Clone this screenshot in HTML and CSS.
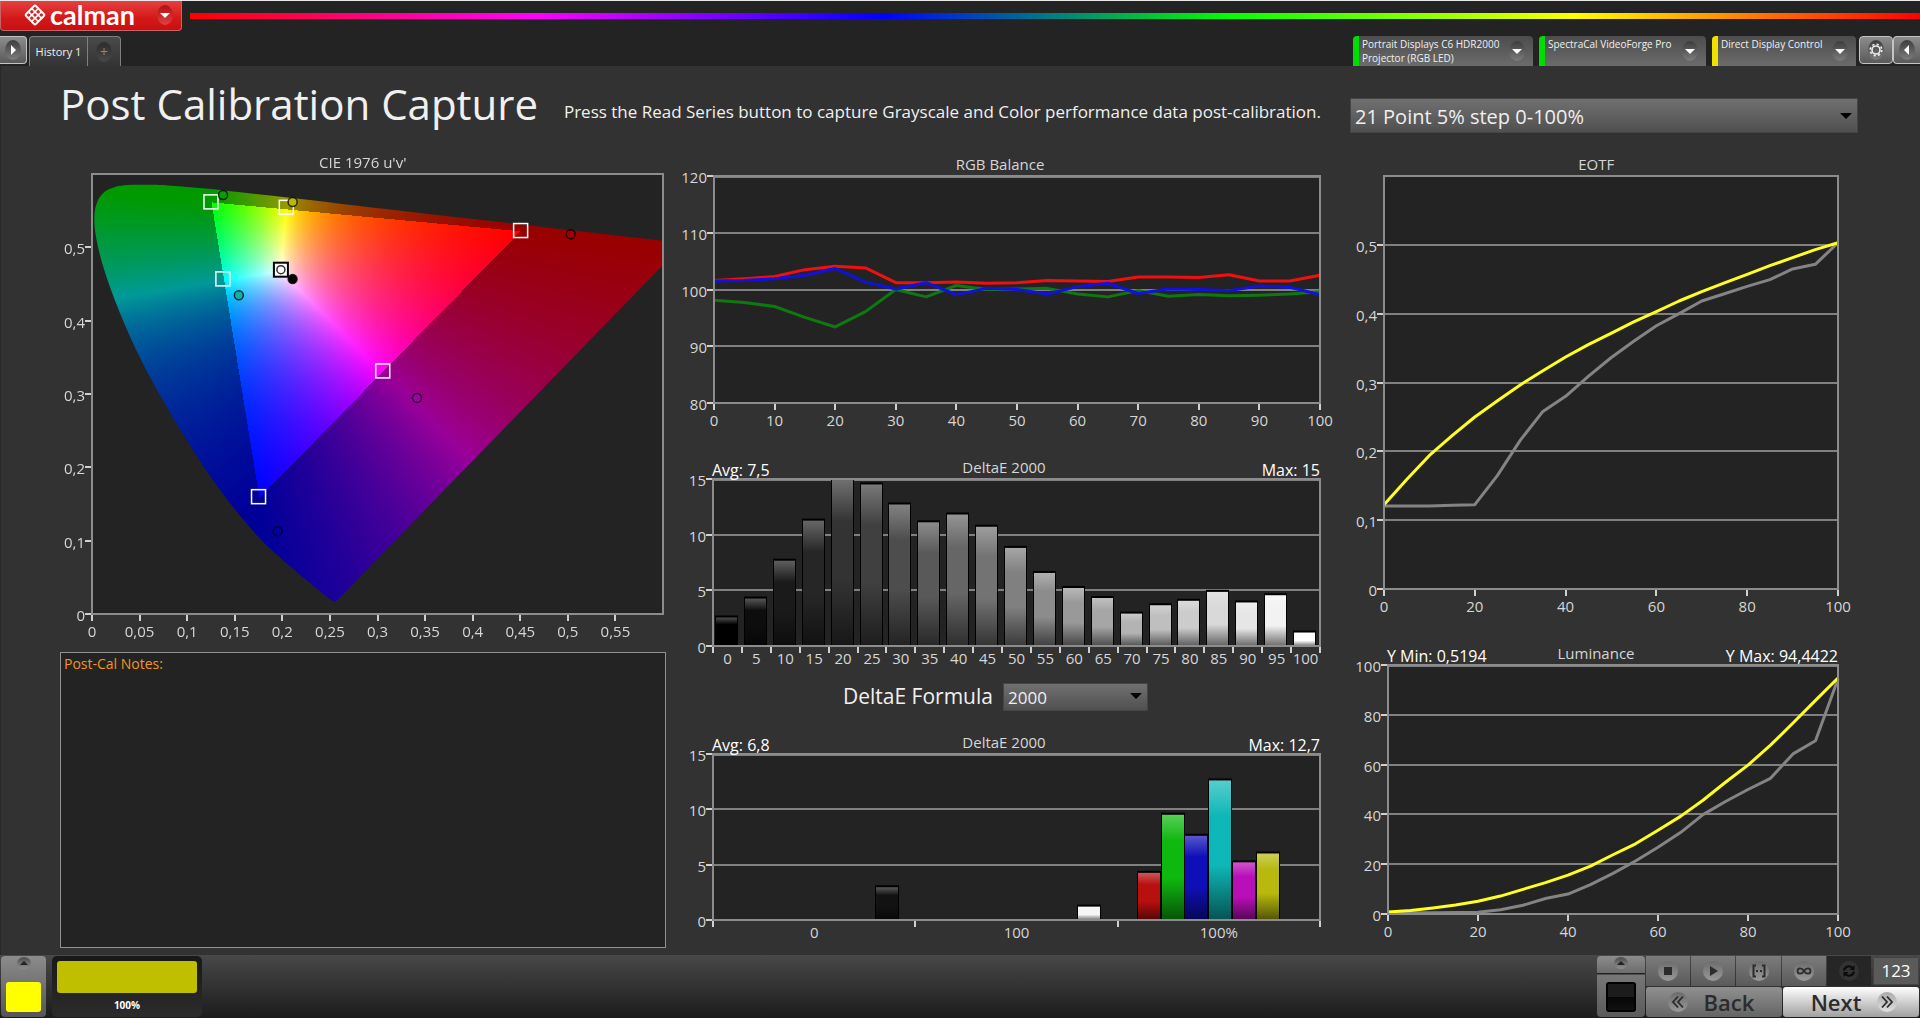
FILE: index.html
```html
<!DOCTYPE html>
<html lang="en">
<head>
    <meta charset="UTF-8">
    <meta name="viewport" content="width=device-width, initial-scale=1.0">
    <title>Post Calibration Capture</title>
    <link rel="stylesheet" href="styles.css">
</head>
<body>

    <header class="topbar">
        <div class="brand-row">
            <button class="brand">
                <svg class="brand-mark" viewBox="0 0 24 24">
                    <g transform="rotate(45 12 12)">
                        <rect x="4" y="4" width="16" height="16" rx="2.5" fill="#fff"/>
                        <g fill="#d82020">
                            <rect x="6" y="6" width="3" height="3" rx=".8"/>
                            <rect x="10.5" y="6" width="3" height="3" rx=".8"/>
                            <rect x="15" y="6" width="3" height="3" rx=".8"/>
                            <rect x="6" y="10.5" width="3" height="3" rx=".8"/>
                            <rect x="10.5" y="10.5" width="3" height="3" rx=".8"/>
                            <rect x="15" y="10.5" width="3" height="3" rx=".8"/>
                            <rect x="6" y="15" width="3" height="3" rx=".8"/>
                            <rect x="10.5" y="15" width="3" height="3" rx=".8"/>
                            <rect x="15" y="15" width="3" height="3" rx=".8"/>
                        </g>
                    </g>
                </svg>
                <span class="brand-name">calman</span>
                <span class="knob knob-red"><svg viewBox="0 0 16 20"><path d="M3 8h10l-5 5z" fill="#fff"/></svg></span>
            </button>
            <div class="rainbow"></div>
        </div>
        <div class="tab-row">
            <button class="edge-button edge-left" aria-label="Expand"><span class="knob"><svg viewBox="0 0 16 20"><path d="M6 5v10l5-5z" fill="#fff"/></svg></span></button>
            <div class="tabs">
                <button class="tab">History 1</button>
                <button class="tab tab-add" aria-label="Add tab"><span class="knob knob-dark">+</span></button>
            </div>
            <div class="devices">
                <button class="device device-meter">
                    <span class="device-name">Portrait Displays C6 HDR2000 Projector (RGB LED)</span>
                    <span class="knob"><svg viewBox="0 0 16 20"><path d="M3 8h10l-5 5z" fill="#fff"/></svg></span>
                </button>
                <button class="device device-source">
                    <span class="device-name">SpectraCal VideoForge Pro</span>
                    <span class="knob"><svg viewBox="0 0 16 20"><path d="M3 8h10l-5 5z" fill="#fff"/></svg></span>
                </button>
                <button class="device device-display">
                    <span class="device-name">Direct Display Control</span>
                    <span class="knob"><svg viewBox="0 0 16 20"><path d="M3 8h10l-5 5z" fill="#fff"/></svg></span>
                </button>
            </div>
            <button class="edge-button edge-gear" aria-label="Settings">
                <span class="knob"><svg viewBox="0 0 16 20">
                    <circle cx="8" cy="10" r="4" fill="none" stroke="#eee" stroke-width="1.6"/>
                    <circle cx="8" cy="10" r="5.8" fill="none" stroke="#eee" stroke-width="1.6" stroke-dasharray="2.2 2.35"/>
                </svg></span>
            </button>
            <button class="edge-button edge-right" aria-label="Collapse"><span class="knob"><svg viewBox="0 0 16 20"><path d="M10 5v10l-5-5z" fill="#fff"/></svg></span></button>
        </div>
    </header>

    <main class="workspace">
        <div class="page-head">
            <h1>Post Calibration Capture</h1>
            <p>Press the Read Series button to capture Grayscale and Color performance data post-calibration.</p>
        </div>
        <div class="series">
            <div class="select-wrap select-large">
                <select id="seriesSelect" aria-label="Series">
                    <option>21 Point 5% step 0-100%</option>
                </select>
            </div>
        </div>

        <section class="column column-left">
            <div class="chart" id="cieChart"></div>
            <textarea class="notes" aria-label="Post-Cal Notes">Post-Cal Notes:</textarea>
        </section>

        <section class="column column-middle">
            <div class="chart" id="rgbChart"></div>
            <div class="chart" id="grayDeltaChart"></div>
            <div class="formula">
                <label for="formulaSelect">DeltaE Formula</label>
                <div class="select-wrap select-small">
                    <select id="formulaSelect">
                        <option>2000</option>
                    </select>
                </div>
            </div>
            <div class="chart" id="colorDeltaChart"></div>
        </section>

        <section class="column column-right">
            <div class="chart" id="eotfChart"></div>
            <div class="chart" id="luminanceChart"></div>
        </section>
    </main>

    <footer class="bottombar">
        <button class="swatch-button" aria-label="Pattern color">
            <span class="mini-knob"><svg viewBox="0 0 14 12"><path d="M3 8h8L7 4z" fill="#222"/></svg></span>
            <span class="swatch swatch-yellow"></span>
        </button>
        <button class="patch">
            <span class="patch-color"></span>
            <span class="patch-label">100%</span>
        </button>
        <div class="transport">
            <button class="swatch-button swatch-split" aria-label="Pattern window">
                <span class="mini-knob"><svg viewBox="0 0 14 12"><path d="M3 8h8L7 4z" fill="#222"/></svg></span>
                <span class="swatch swatch-black"></span>
            </button>
            <div class="controls">
                <div class="control-row">
                    <button class="control" aria-label="Stop"><span class="dot"><svg viewBox="0 0 20 20"><rect x="6" y="6" width="8" height="8"/></svg></span></button>
                    <button class="control" aria-label="Read"><span class="dot"><svg viewBox="0 0 20 20"><path d="M7 5v10l8-5z"/></svg></span></button>
                    <button class="control" aria-label="Read series"><span class="dot"><svg viewBox="0 0 20 20"><path d="M7 4.5H4.5v11H7M13 4.5h2.5v11H13" fill="none" stroke="#2c2c2c" stroke-width="2"/><path d="M7 9h2v2H7zM11 9h2v2h-2z"/></svg></span></button>
                    <button class="control" aria-label="Read continuous"><span class="dot"><svg viewBox="0 0 20 20"><path d="M10 10c-2-3.5-6.5-3.5-6.5 0s4.5 3.5 6.5 0 6.5-3.5 6.5 0-4.5 3.5-6.5 0z" fill="none" stroke="#2c2c2c" stroke-width="1.8"/></svg></span></button>
                    <button class="control control-off" aria-label="Refresh"><span class="dot"><svg viewBox="0 0 20 20"><path d="M5 9.5a5 5 0 0 1 9-2M15 10.5a5 5 0 0 1-9 2" fill="none" stroke="#0a0a0a" stroke-width="2"/><path d="M15.5 4v5h-5zM4.5 16v-5h5z" fill="#0a0a0a"/></svg></span></button>
                    <button class="counter">123</button>
                </div>
                <div class="control-row">
                    <button class="nav nav-back"><span class="dot"><svg viewBox="0 0 20 20"><path d="M10 4.5L5 10l5 5.5M15 4.5L10 10l5 5.5" fill="none" stroke="#2c2c2c" stroke-width="1.8"/></svg></span>Back</button>
                    <button class="nav nav-next">Next<span class="dot"><svg viewBox="0 0 20 20"><path d="M5 4.5l5 5.5-5 5.5M10 4.5l5 5.5-5 5.5" fill="none" stroke="#2c2c2c" stroke-width="1.8"/></svg></span></button>
                </div>
            </div>
        </div>
    </footer>

    <script src="charts.js"></script>
</body>
</html>
```

FILE: styles.css
```css
* {
    box-sizing: border-box;
}

body {
    margin: 0;
    min-height: 100vh;
    display: flex;
    flex-direction: column;
    background-color: #323232;
    color: #f0f0f0;
    font-family: "Open Sans", "Noto Sans", sans-serif;
}

button, select, textarea {
    font-family: inherit;
    color: inherit;
    border: none;
    padding: 0;
    margin: 0;
}

button {
    cursor: pointer;
}

svg {
    display: block;
}

/* header */
.topbar {
    height: 66px;
    display: flex;
    flex-direction: column;
    justify-content: space-between;
    background-color: #232323;
    border-top: 1px solid #e8e8e8;
}

.brand-row {
    display: flex;
    gap: 8px;
}

.brand {
    width: 182px;
    height: 30px;
    display: flex;
    align-items: center;
    padding: 0 8px 2px 22px;
    background: linear-gradient(#e64040, #d41818 60%, #c81010);
    border: 1px solid #c86464;
    border-top: none;
    border-radius: 0 0 4px 4px;
}

.brand-mark {
    width: 24px;
    height: 24px;
}

.brand-name {
    flex: 1;
    padding-left: 3px;
    text-align: left;
    font-family: Lato, sans-serif;
    font-size: 27px;
    font-weight: 700;
    line-height: 26px;
    color: #fff;
}

.rainbow {
    flex: 1;
    height: 6px;
    margin-top: 12px;
    background: linear-gradient(to right, #f00, #f0f, #00f, #0f0, #ff0, #f00);
}

.knob {
    flex: none;
    width: 16px;
    height: 20px;
    border-radius: 50%;
    background: linear-gradient(#3c3c3c, #7d7d7d);
}

.knob-red {
    background: linear-gradient(#b01010, #e04040);
}

.knob-dark {
    background: linear-gradient(#2c2c2c, #484848);
    color: #888;
    font-size: 14px;
    line-height: 20px;
}

.tab-row {
    height: 30px;
    display: flex;
}

.edge-button {
    height: 28px;
    display: flex;
    align-items: center;
    justify-content: center;
    background: linear-gradient(#8c8c8c, #5a5a5a);
    border: 1px solid #c4c4c4;
}

.edge-left {
    width: 27px;
    border-left: none;
    border-radius: 0 4px 4px 0;
}

.edge-gear {
    width: 34px;
    border-radius: 4px;
}

.edge-right {
    width: 27px;
    border-right: none;
    border-radius: 4px 0 0 4px;
}

.tabs {
    display: flex;
    margin-left: 2px;
}

.tab {
    width: 59px;
    background: linear-gradient(#4a4a4a, #333);
    border: 1px solid #808080;
    border-bottom: none;
    border-radius: 4px 0 0 0;
    font-size: 11px;
    white-space: nowrap;
}

.tab-add {
    width: 33px;
    display: flex;
    align-items: center;
    justify-content: center;
    border-left: none;
    border-radius: 0 4px 0 0;
}

.devices {
    flex: 1;
    display: flex;
    justify-content: flex-end;
    gap: 6px;
    padding-right: 3px;
}

.device {
    display: flex;
    align-items: center;
    gap: 4px;
    padding: 0 8px 0 3px;
    background: linear-gradient(#4c4c4c, #6c6c6c);
    border-left: 6px solid #0d0;
    border-radius: 4px 4px 0 0;
}

.device-meter {
    width: 180px;
}

.device-source {
    width: 167px;
}

.device-display {
    width: 144px;
    border-left-color: #f0e000;
}

.device-name {
    flex: 1;
    align-self: flex-start;
    padding-top: 1px;
    text-align: left;
    font-size: 10px;
    line-height: 14px;
}

/* workspace */
.workspace {
    flex: 1;
    display: grid;
    grid-template-columns: minmax(0, 606fr) minmax(0, 641fr) minmax(0, 523fr);
    grid-template-rows: 84px minmax(0, 1fr);
    column-gap: 14px;
    padding: 0 62px 7px 59px;
    border-left: 1px solid #282828;
}

.page-head {
    grid-column: 1 / 3;
    display: flex;
    align-items: center;
    justify-content: space-between;
    padding-bottom: 8px;
}

h1 {
    margin: 0;
    font-size: 42px;
    font-weight: 400;
    line-height: 56px;
}

.page-head p {
    margin: 16px 0 0;
    font-size: 17px;
    line-height: 24px;
}

.series {
    padding: 32px 0 0 15px;
}

.select-wrap {
    position: relative;
}

.select-wrap::after {
    content: "";
    position: absolute;
    right: 6px;
    top: 50%;
    margin-top: -3px;
    border: 6px solid transparent;
    border-top-color: #000;
    border-bottom: none;
    pointer-events: none;
}

.select-wrap select {
    width: 100%;
    appearance: none;
    background: linear-gradient(#707070, #505050);
    border: 1px solid #454545;
    border-radius: 0;
    padding: 1px 4px 0;
}

.select-large select {
    height: 35px;
    font-size: 20px;
}

.select-small {
    width: 145px;
}

.select-small select {
    height: 28px;
    font-size: 17px;
}

.column {
    min-height: 0;
    display: grid;
}

.column-left {
    grid-template-rows: minmax(0, 502fr) minmax(0, 296fr);
}

.column-middle {
    grid-template-rows: minmax(0, 290fr) minmax(0, 240fr) minmax(0, 40fr) minmax(0, 228fr);
}

.column-right {
    grid-template-rows: minmax(0, 480fr) minmax(0, 318fr);
    padding-left: 15px;
}

.chart {
    position: relative;
    min-height: 0;
}

.chart svg {
    position: absolute;
    left: 0;
    top: 0;
    overflow: visible;
}

.chart canvas {
    position: absolute;
}

.chart text {
    font-size: 15px;
    fill: #d6d6d6;
}

.chart .chart-stat {
    font-size: 16px;
    fill: #fff;
}

.plot {
    fill: #232323;
}

.frame {
    fill: none;
    stroke: #8c8c8c;
    stroke-width: 2;
}

.gridline {
    stroke: #808080;
    stroke-width: 2;
}

.tick {
    stroke: #d0d0d0;
    stroke-width: 2;
}

.series-line {
    fill: none;
    stroke-width: 3;
    stroke-linejoin: round;
}

.notes {
    min-height: 0;
    resize: none;
    padding: 1px 3px;
    background-color: #232323;
    border: 1px solid #909090;
    outline: none;
    color: #f0961c;
    font-size: 14px;
    line-height: 20px;
}

.formula {
    display: flex;
    align-items: center;
    justify-content: center;
    gap: 10px;
    padding: 0 10px 8px 0;
    font-size: 21px;
}

/* bottom bar */
.bottombar {
    height: 63px;
    display: flex;
    gap: 6px;
    padding: 1px 1px 0;
    background: linear-gradient(#484848, #1c1c1c);
}

.swatch-button {
    width: 45px;
    height: 61px;
    display: flex;
    flex-direction: column;
    align-items: center;
    justify-content: space-between;
    padding: 1px 0 5px;
    background: linear-gradient(#8c8c8c, #555);
    border-radius: 4px;
}

.mini-knob {
    width: 14px;
    height: 12px;
    border-radius: 50%;
    background: linear-gradient(#4c4c4c, #909090);
}

.swatch {
    width: 35px;
    height: 30px;
    border-radius: 3px;
}

.swatch-yellow {
    background-color: #ff0;
}

.swatch-split {
    width: 48px;
    background: linear-gradient(#8c8c8c, #6c6c6c 17px, #222 17px, #222 18px, #777 19px, #5a5a5a);
}

.swatch-black {
    width: 30px;
    background: linear-gradient(#1c1c1c 50%, #050505 50%, #111);
    border: 2px solid #000;
}

.patch {
    width: 150px;
    height: 61px;
    display: flex;
    flex-direction: column;
    align-items: center;
    padding: 5px 5px 0;
    background: linear-gradient(#181818, #2c2c2c);
    border-radius: 5px;
}

.patch-color {
    width: 100%;
    height: 36px;
    border-radius: 3px;
    background-color: #bfbf00;
}

.patch-label {
    font-size: 10px;
    font-weight: 700;
    line-height: 24px;
    color: #fff;
}

.transport {
    margin-left: auto;
    display: flex;
    gap: 1px;
}

.controls {
    width: 273px;
    display: flex;
    flex-direction: column;
    gap: 1px;
}

.control-row {
    height: 30px;
    display: flex;
    gap: 1px;
}

.control {
    flex: 1;
    display: flex;
    align-items: center;
    justify-content: center;
    background: linear-gradient(#7c7c7c, #5a5a5a);
}

.control-off {
    background: #262626;
}

.dot {
    flex: none;
    width: 20px;
    height: 20px;
    border-radius: 50%;
    background: linear-gradient(#6c6c6c, #999);
    fill: #2c2c2c;
}

.control-off .dot {
    background: #333;
}

.counter {
    width: 46px;
    margin: 1px 0 1px 1px;
    background-color: #5a5a5a;
    border: 1px solid #444;
    color: #fff;
    font-size: 17px;
    line-height: 24px;
}

.nav {
    flex: 1;
    display: flex;
    align-items: center;
    justify-content: center;
    gap: 16px;
    border-radius: 3px;
    color: #2c2c2c;
    font-size: 22px;
    font-weight: 600;
    line-height: 28px;
}

.nav-back {
    padding-right: 6px;
    background: linear-gradient(#909090, #646464);
}

.nav-next {
    padding-left: 6px;
    background: linear-gradient(#fff, #a0a0a0);
}

.nav-next .dot {
    background: linear-gradient(#aaa, #e0e0e0);
}
```

FILE: charts.js
```js
const SVG_NS = "http://www.w3.org/2000/svg";
const CHARACTER_WIDTH = 9;

// 0..100 in steps of 5
const LEVELS = Array.from({ length: 21 }, (_, i) => i * 5);

const RGB_BALANCE = {
    green: [98.1, 97.7, 97, 95.1, 93.4, 96.1, 100, 98.7, 100.7, 100, 100.1, 100.2, 99.2, 98.7, 99.8, 98.8, 99.1, 98.9, 99, 99.2, 99.6],
    red: [101.6, 101.9, 102.3, 103.5, 104.1, 103.8, 101.2, 101.2, 101.3, 101.1, 101.2, 101.6, 101.5, 101.4, 102.2, 102.2, 102.1, 102.6, 101.5, 101.5, 102.5],
    blue: [101.5, 101.6, 101.9, 102.5, 103.7, 101.3, 100.1, 101.2, 99.1, 100.2, 100, 99.2, 100.5, 101.1, 99.3, 100.1, 100, 99.8, 100.6, 100.4, 99.1]
};

const GRAY_DELTA = [2.65, 4.35, 7.75, 11.35, 15, 14.6, 12.8, 11.2, 11.9, 10.8, 8.9, 6.65, 5.3, 4.4, 3, 3.75, 4.15, 4.95, 4, 4.65, 1.3];

// slot is the position of the bar inside its category
const COLOR_DELTA = [
    { category: 0, slot: 6, value: 3.05, color: [18, 18, 18] },
    { category: 1, slot: 6, value: 1.3, color: [245, 245, 245] },
    { category: 2, slot: 0, value: 4.35, color: [184, 15, 15] },
    { category: 2, slot: 1, value: 9.6, color: [15, 184, 15] },
    { category: 2, slot: 2, value: 7.7, color: [15, 15, 184] },
    { category: 2, slot: 3, value: 12.7, color: [15, 184, 184] },
    { category: 2, slot: 4, value: 5.3, color: [184, 15, 184] },
    { category: 2, slot: 5, value: 6.1, color: [184, 184, 15] }
];

const EOTF = {
    measured: [.1206, .1206, .1206, .1215, .1225, .165, .216, .258, .28, .309, .336, .36, .3825, .4, .4184, .429, .4397, .4494, .465, .4717, .503],
    target: [.1225, .159, .194, .2228, .2499, .2736, .2964, .3172, .337, .355, .3715, .388, .403, .4184, .432, .4446, .457, .4697, .4814, .493, .5031]
};

const LUMINANCE = {
    measured: [.5, .5, .5, .6, .7, 1.7, 3.5, 6.2, 8, 11.8, 16.3, 21.3, 26.8, 32.7, 39.9, 45.2, 50, 54.5, 64.3, 69.6, 94.4],
    target: [.8, 1.4, 2.4, 3.6, 5.1, 7.2, 9.9, 12.6, 15.6, 19.2, 23.8, 28.2, 33.6, 39.2, 45.7, 52.9, 59.8, 67.8, 76.7, 85.8, 94.8]
};

// spectral locus, CIE 1931 xy
const LOCUS = [
    [.1741, .005], [.1726, .0048], [.1714, .0051], [.1689, .0069], [.1644, .0109], [.1566, .0177],
    [.144, .0297], [.1355, .0399], [.1241, .0578], [.1096, .0868], [.0913, .1327], [.0687, .2007],
    [.0454, .295], [.0235, .4127], [.0082, .5384], [.0039, .6548], [.0139, .7502], [.0389, .812],
    [.0743, .8338], [.1142, .8262], [.1547, .8059], [.1929, .7816], [.2296, .7543], [.3016, .6923],
    [.3731, .6245], [.4441, .5547], [.5125, .4866], [.5752, .4242], [.627, .3725], [.6658, .334],
    [.6915, .3083], [.719, .2809], [.7347, .2653]
];

const TARGETS = [[.125, .562], [.2042, .5545], [.4504, .5229], [.1375, .457], [.3055, .3315], [.175, .16]];
const WHITE_POINT = [.1985, .4695];

const READINGS = [
    { uv: [.1377, .5713], fill: "#0a9a0a" },
    { uv: [.2108, .5618], fill: "#b8b800" },
    { uv: [.503, .5179], fill: "#a00000" },
    { uv: [.1543, .4346], fill: "#12b0a8" },
    { uv: [.3415, .2947], fill: "#a000a8" },
    { uv: [.195, .113], fill: "#0000a0" },
    { uv: [.2108, .4567], fill: "#000" }
];

function add(parent, name, attributes, text) {
    const node = document.createElementNS(SVG_NS, name);
    for (const key in attributes) {
        node.setAttribute(key, attributes[key]);
    }
    if (text !== undefined) {
        node.textContent = text;
    }
    parent.appendChild(node);
    return node;
}

function label(value) {
    return String(value).replace(".", ",");
}

// Draws the frame, grid, axes and title, returns the scales
function createChart(id, options) {
    const box = document.getElementById(id);
    box.innerHTML = "";
    const width = box.clientWidth;
    const height = box.clientHeight;
    const svg = add(box, "svg", { width, height });
    const left = options.left;
    const right = width - options.right;
    const top = options.top;
    const bottom = height - options.bottom;
    const [x0, x1] = options.x;
    const [y0, y1] = options.y;
    const x = value => left + (value - x0) / (x1 - x0) * (right - left);
    const y = value => bottom - (value - y0) / (y1 - y0) * (bottom - top);

    add(svg, "rect", { class: "plot", x: left, y: top, width: right - left, height: bottom - top });
    if (options.grid) {
        options.yTicks.slice(1).forEach(value => {
            const lineY = Math.round(y(value)) + (value === y1 ? 1 : 0);
            add(svg, "line", { class: "gridline", x1: left, x2: right, y1: lineY, y2: lineY });
        });
    }
    const data = add(svg, "g", {});
    add(svg, "rect", { class: "frame", x: left, y: top, width: right - left, height: bottom - top });

    let longest = 0;
    options.yTicks.forEach(value => {
        const tickY = Math.round(y(value));
        longest = Math.max(longest, label(value).length - (label(value).includes(",") ? .5 : 0));
        add(svg, "line", { class: "tick", x1: left - 7, x2: left - 1, y1: tickY, y2: tickY });
        add(svg, "text", { x: left - 7, y: tickY + 7, "text-anchor": "end" }, label(value));
    });
    options.xTicks.forEach(value => {
        const tickX = Math.round(x(value));
        add(svg, "line", { class: "tick", x1: tickX, x2: tickX, y1: bottom + 1, y2: bottom + 7 });
    });
    (options.xLabels || options.xTicks.map(value => ({ at: value, text: label(value) }))).forEach(item => {
        add(svg, "text", { x: x(item.at), y: bottom + options.labelDrop, "text-anchor": "middle" }, item.text);
    });

    const labelLeft = left - 7 - longest * CHARACTER_WIDTH;
    add(svg, "text", { x: (labelLeft + right) / 2, y: top - 6, "text-anchor": "middle" }, options.title);
    if (options.stats) {
        add(svg, "text", { class: "chart-stat", x: left - 1, y: top - 3 }, options.stats[0]);
        add(svg, "text", { class: "chart-stat", x: right, y: top - 3, "text-anchor": "end" }, options.stats[1]);
    }
    return { box, svg, data, x, y, left, right, top, bottom };
}

function drawLine(chart, values, color) {
    const points = values.map((value, i) => chart.x(LEVELS[i]) + "," + chart.y(value)).join(" ");
    add(chart.data, "polyline", { class: "series-line", points, stroke: color });
}

function drawBar(chart, x, width, value, color, id) {
    const lighter = color.map(c => Math.round(c + (255 - c) * .3));
    const darker = color.map(c => Math.round(c * .45));
    const gradient = add(chart.data, "linearGradient", { id, x1: 0, y1: 0, x2: 0, y2: 1 });
    [[0, lighter], [.25, color], [.6, color], [1, darker]].forEach(([offset, rgb]) => {
        add(gradient, "stop", { offset, "stop-color": `rgb(${rgb.join(",")})` });
    });
    const y = chart.y(value);
    add(chart.data, "rect", { x, y: y - 1, width, height: chart.bottom - y + 1, fill: "#000" });
    add(chart.data, "rect", { x: x + 1, y: y + 1, width: width - 2, height: chart.bottom - y - 1, fill: `url(#${id})` });
}

function uvColor(u, v) {
    // u'v' to XYZ with Y = 1, then to linear Rec.709
    const X = 9 * u / (4 * v);
    const Z = (12 - 3 * u - 20 * v) / (4 * v);
    const linear = [
        3.2406 * X - 1.5372 - .4986 * Z,
        -.9689 * X + 1.8758 + .0415 * Z,
        .0557 * X - .204 + 1.057 * Z
    ];
    const inside = Math.min(...linear) >= 0;
    const peak = Math.max(...linear);
    const scale = inside ? 255 : 153;
    return linear.map(c => scale * Math.max(c, 0) / peak);
}

// Smooth closed outline of the locus through every point
function traceLocus(context, points) {
    const last = points.length - 1;
    context.beginPath();
    context.moveTo(...points[0]);
    for (let i = 0; i < last; i++) {
        const before = points[Math.max(i - 1, 0)];
        const from = points[i];
        const to = points[i + 1];
        const after = points[Math.min(i + 2, last)];
        context.bezierCurveTo(
            from[0] + (to[0] - before[0]) / 6, from[1] + (to[1] - before[1]) / 6,
            to[0] - (after[0] - from[0]) / 6, to[1] - (after[1] - from[1]) / 6,
            to[0], to[1]
        );
    }
    context.closePath();
}

function drawGamut(chart) {
    const canvas = document.createElement("canvas");
    const width = Math.round(chart.right - chart.left) - 2;
    const height = Math.round(chart.bottom - chart.top) - 2;
    canvas.width = width;
    canvas.height = height;
    canvas.style.left = chart.left + 1 + "px";
    canvas.style.top = chart.top + 1 + "px";
    canvas.style.backgroundColor = "#232323";

    const colors = document.createElement("canvas");
    colors.width = width;
    colors.height = height;
    const colorContext = colors.getContext("2d");
    const image = colorContext.createImageData(width, height);
    for (let py = 0; py < height; py++) {
        for (let px = 0; px < width; px++) {
            const rgb = uvColor((px + .5) / width * .6, (height - py - .5) / height * .6);
            image.data.set([rgb[0], rgb[1], rgb[2], 255], (py * width + px) * 4);
        }
    }
    colorContext.putImageData(image, 0, 0);

    const points = LOCUS.map(([x, y]) => {
        const d = -2 * x + 12 * y + 3;
        return [4 * x / d / .6 * width, height - 9 * y / d / .6 * height];
    });
    const context = canvas.getContext("2d");
    traceLocus(context, points);
    context.clip();
    context.drawImage(colors, 0, 0);
    chart.box.insertBefore(canvas, chart.svg);
    chart.svg.querySelector(".plot").style.fill = "none";
}

function drawCie() {
    const ticks = [0, .05, .1, .15, .2, .25, .3, .35, .4, .45, .5, .55];
    const chart = createChart("cieChart", {
        title: "CIE 1976 u'v'", left: 32, right: 3, top: 24, bottom: 38, labelDrop: 23,
        x: [0, .6], y: [0, .6], xTicks: ticks, yTicks: [0, .1, .2, .3, .4, .5]
    });
    drawGamut(chart);
    TARGETS.forEach(([u, v]) => {
        add(chart.data, "rect", { x: chart.x(u) - 7, y: chart.y(v) - 7, width: 14, height: 14, fill: "none", stroke: "#fff", "stroke-width": 1.5 });
    });
    const [wu, wv] = WHITE_POINT;
    add(chart.data, "rect", { x: chart.x(wu) - 7, y: chart.y(wv) - 7, width: 14, height: 14, fill: "#fff", stroke: "#000", "stroke-width": 2 });
    add(chart.data, "circle", { cx: chart.x(wu), cy: chart.y(wv), r: 4, fill: "#fff", stroke: "#333", "stroke-width": 1.5 });
    READINGS.forEach(({ uv, fill }) => {
        add(chart.data, "circle", { cx: chart.x(uv[0]), cy: chart.y(uv[1]), r: 4.5, fill, stroke: "#000", "stroke-opacity": .75, "stroke-width": 1.5 });
    });
}

function drawRgbBalance() {
    const chart = createChart("rgbChart", {
        title: "RGB Balance", left: 34, right: 1, top: 26, bottom: 37, labelDrop: 23, grid: true,
        x: [0, 100], y: [80, 120], xTicks: [0, 10, 20, 30, 40, 50, 60, 70, 80, 90, 100], yTicks: [80, 90, 100, 110, 120]
    });
    drawLine(chart, RGB_BALANCE.green, "#0f780f");
    drawLine(chart, RGB_BALANCE.red, "#f01010");
    drawLine(chart, RGB_BALANCE.blue, "#1010e0");
}

function drawGrayDelta() {
    const chart = createChart("grayDeltaChart", {
        title: "DeltaE 2000", left: 33, right: 1, top: 39, bottom: 34, labelDrop: 18, grid: true,
        stats: ["Avg: 7,5", "Max: 15"],
        x: [0, 21], y: [0, 15], xTicks: Array.from({ length: 22 }, (_, i) => i), yTicks: [0, 5, 10, 15],
        xLabels: LEVELS.map((level, i) => ({ at: i + .5, text: level }))
    });
    const slot = (chart.right - chart.left) / 21;
    GRAY_DELTA.forEach((value, i) => {
        const gray = Math.round(i / 20 * 255);
        drawBar(chart, Math.round(chart.left + i * slot + 2), Math.round(slot * .8), value, [gray, gray, gray], "gray" + i);
    });
}

function drawColorDelta() {
    const chart = createChart("colorDeltaChart", {
        title: "DeltaE 2000", left: 33, right: 1, top: 34, bottom: 28, labelDrop: 18, grid: true,
        stats: ["Avg: 6,8", "Max: 12,7"],
        x: [0, 3], y: [0, 15], xTicks: [0, 1, 2, 3], yTicks: [0, 5, 10, 15],
        xLabels: [{ at: .5, text: "0" }, { at: 1.5, text: "100" }, { at: 2.5, text: "100%" }]
    });
    const pitch = (chart.right - chart.left) / 3 / 8.5;
    COLOR_DELTA.forEach(({ category, slot, value, color }, i) => {
        drawBar(chart, Math.round(chart.x(category) + (slot + .8) * pitch), Math.round(pitch), value, color, "color" + i);
    });
}

function drawEotf() {
    const chart = createChart("eotfChart", {
        title: "EOTF", left: 34, right: 20, top: 26, bottom: 41, labelDrop: 23, grid: true,
        x: [0, 100], y: [0, .6], xTicks: [0, 20, 40, 60, 80, 100], yTicks: [0, .1, .2, .3, .4, .5]
    });
    drawLine(chart, EOTF.measured, "#848484");
    drawLine(chart, EOTF.target, "#ffff20");
}

function drawLuminance() {
    const chart = createChart("luminanceChart", {
        title: "Luminance", left: 38, right: 20, top: 35, bottom: 34, labelDrop: 23, grid: true,
        stats: ["Y Min: 0,5194", "Y Max: 94,4422"],
        x: [0, 100], y: [0, 100], xTicks: [0, 20, 40, 60, 80, 100], yTicks: [0, 20, 40, 60, 80, 100]
    });
    drawLine(chart, LUMINANCE.measured, "#848484");
    drawLine(chart, LUMINANCE.target, "#ffff20");
}

function drawAll() {
    drawCie();
    drawRgbBalance();
    drawGrayDelta();
    drawColorDelta();
    drawEotf();
    drawLuminance();
}

drawAll();
window.addEventListener("resize", drawAll);
```
